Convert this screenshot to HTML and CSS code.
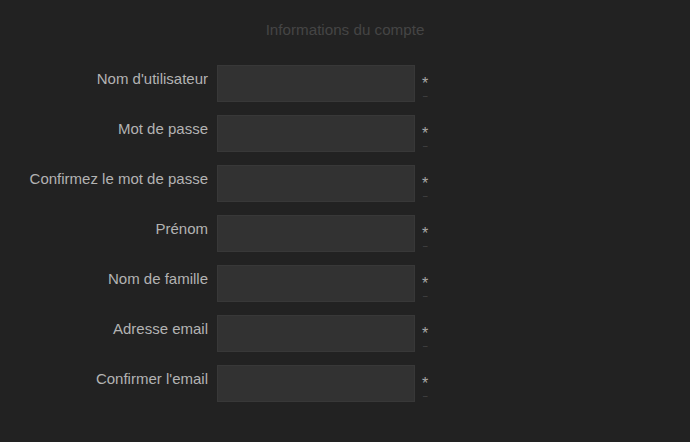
FILE: index.html
```html
<!DOCTYPE html>
<html lang="fr">
<head>
<meta charset="utf-8">
<link rel="stylesheet" href="styles.css">
</head>
<body>
<div class="page">
  <h1 class="title">Informations du compte</h1>
  <form class="form">
    <div class="row"><label class="label">Nom d'utilisateur</label><input class="field" type="text"><span class="req"><span class="star">*</span><span class="dash">---</span></span></div>
    <div class="row"><label class="label">Mot de passe</label><input class="field" type="password"><span class="req"><span class="star">*</span><span class="dash">---</span></span></div>
    <div class="row"><label class="label">Confirmez le mot de passe</label><input class="field" type="password"><span class="req"><span class="star">*</span><span class="dash">---</span></span></div>
    <div class="row"><label class="label">Prénom</label><input class="field" type="text"><span class="req"><span class="star">*</span><span class="dash">---</span></span></div>
    <div class="row"><label class="label">Nom de famille</label><input class="field" type="text"><span class="req"><span class="star">*</span><span class="dash">---</span></span></div>
    <div class="row"><label class="label">Adresse email</label><input class="field" type="text"><span class="req"><span class="star">*</span><span class="dash">---</span></span></div>
    <div class="row"><label class="label">Confirmer l'email</label><input class="field" type="text"><span class="req"><span class="star">*</span><span class="dash">---</span></span></div>
  </form>
</div>
</body>
</html>
```
FILE: styles.css
```css
html, body {
  margin: 0;
  padding: 0;
  background: #222222;
}
body {
  font-family: "Liberation Sans", Arial, sans-serif;
  width: 690px;
  height: 442px;
  overflow: hidden;
}
.page {
  padding-top: 20px;
}
.title {
  margin: 0;
  font-size: 15.2px;
  font-weight: normal;
  line-height: 20px;
  color: #454545;
  text-align: center;
}
.form {
  margin: 25px 0 0 0;
  display: flex;
  flex-direction: column;
  gap: 13px;
}
.row {
  display: flex;
  align-items: flex-start;
  height: 37px;
}
.label {
  width: 208px;
  text-align: right;
  font-size: 15px;
  line-height: 18px;
  padding-top: 5px;
  color: #b3b3b3;
}
.field {
  box-sizing: border-box;
  margin: 0 0 0 9px;
  width: 198px;
  height: 37px;
  background: #323232;
  border: 1px solid #383838;
  outline: none;
  padding: 0 6px;
  color: #ccc;
}
.req {
  display: flex;
  flex-direction: column;
  align-items: center;
  gap: 1px;
  margin-left: 5px;
  padding-top: 11px;
  width: 10px;
}
.star {
  font-size: 16px;
  line-height: 16px;
  color: #a8a8a8;
}
.dash {
  font-size: 6px;
  line-height: 6px;
  color: #666;
  letter-spacing: -0.5px;
}
```
